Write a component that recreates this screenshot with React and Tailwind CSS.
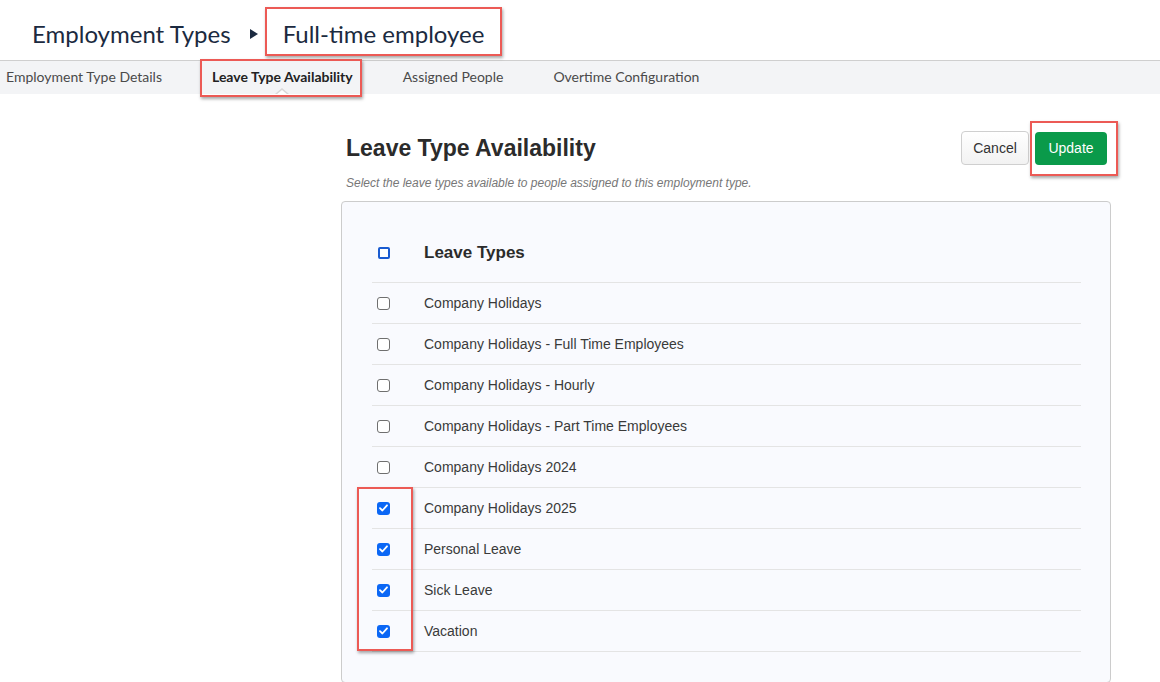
import { useState } from "react";

const LEAVE_TYPES = [
  { name: "Company Holidays", on: false },
  { name: "Company Holidays - Full Time Employees", on: false },
  { name: "Company Holidays - Hourly", on: false },
  { name: "Company Holidays - Part Time Employees", on: false },
  { name: "Company Holidays 2024", on: false },
  { name: "Company Holidays 2025", on: true },
  { name: "Personal Leave", on: true },
  { name: "Sick Leave", on: true },
  { name: "Vacation", on: true },
];

const TABS = ["Employment Type Details", "Leave Type Availability", "Assigned People", "Overtime Configuration"];

// red annotation outline
function Callout({ className }) {
  return (
    <div
      className={`absolute pointer-events-none border-[2.5px] border-[#ec5a55] shadow-[1px_2px_3px_rgba(0,0,0,0.35)] ${className}`}
    />
  );
}

function Check({ on, onClick }) {
  if (on) {
    return (
      <button
        onClick={onClick}
        className="w-[13px] h-[13px] rounded-[3px] bg-[#0b67f5] flex items-center justify-center"
      >
        <svg width="9" height="8" viewBox="0 0 9 8" fill="none">
          <path d="M1 4.2 L3.4 6.5 L8 1.3" stroke="white" strokeWidth="1.8" strokeLinecap="round" strokeLinejoin="round" />
        </svg>
      </button>
    );
  }
  return (
    <button
      onClick={onClick}
      className="w-[13px] h-[13px] rounded-[3px] bg-white border border-[#6f6f6f]"
    />
  );
}

export default function App() {
  const [items, setItems] = useState(LEAVE_TYPES);

  const toggle = (i) =>
    setItems((prev) => prev.map((it, j) => (j === i ? { ...it, on: !it.on } : it)));

  return (
    <div className="w-[1160px] h-[682px] overflow-hidden bg-white">
      {/* Breadcrumb */}
      <div className="h-[60px] flex items-start pt-[7px] pl-[32px] font-['Lato',sans-serif] text-[#1b2a40] text-[24px]">
        <span className="h-[49px] flex items-center pt-[4px]">Employment Types</span>
        <span className="mt-[22px] ml-[19px] mr-[7px] w-0 h-0 border-y-[5px] border-y-transparent border-l-[8px] border-l-[#1b2a40]" />
        <div className="relative h-[49px] flex items-center pt-[4px] px-[18px]">
          <span>Full-time employee</span>
          <Callout className="left-0 right-0 top-0 bottom-0" />
        </div>
      </div>

      {/* Tabs */}
      <div className="h-[34px] bg-[#f3f4f6] border-t border-[#cfcfcf] flex items-center gap-[50px] pl-[6px] pb-[3px] font-['Lato',sans-serif] text-[14px]">
        {TABS.map((t) =>
          t === "Leave Type Availability" ? (
            <div key={t} className="relative h-full flex items-center font-bold text-[#222]">
              <span>{t}</span>
              <span className="absolute left-1/2 -translate-x-1/2 -bottom-[3px] w-0 h-0 border-x-[7px] border-x-transparent border-b-[6px] border-b-[#d8d8d8]" />
              <span className="absolute left-1/2 -translate-x-1/2 -bottom-[4px] w-0 h-0 border-x-[6px] border-x-transparent border-b-[5px] border-b-white" />
              <Callout className="-left-[12px] -right-[9px] -top-[2px] -bottom-[6px]" />
            </div>
          ) : (
            <span key={t} className="text-[#4a4a4a]">{t}</span>
          )
        )}
      </div>

      {/* Content */}
      <div className="pl-[341px] w-[1111px] font-['Liberation_Sans',Arial,sans-serif]">
        <div className="h-[34px] flex items-center justify-between mt-[37px] pl-[5px] pr-[4px]">
          <h2 className="text-[23px] leading-none font-bold text-[#2b2b2b]">Leave Type Availability</h2>
          <div className="flex items-center gap-[6px]">
            <button className="h-[34px] w-[68px] rounded-[4px] border border-[#cfcfcf] bg-gradient-to-b from-white to-[#f2f2f2] text-[14px] text-[#333]">
              Cancel
            </button>
            <div className="relative">
              <button className="h-[33px] w-[72px] rounded-[4px] bg-[#0a9a4a] text-[14px] text-white">
                Update
              </button>
              <Callout className="-left-[5px] -right-[11px] -top-[11px] -bottom-[11px]" />
            </div>
          </div>
        </div>
        <p className="pl-[5px] mt-[9px] text-[12px] leading-[18px] italic text-[#777]">
          Select the leave types available to people assigned to this employment type.
        </p>

        {/* Leave types panel */}
        <div className="mt-[9px] h-[482px] border border-[#cccccc] rounded-[4px] bg-[#f9fafe] pt-[21px] pl-[30px] pr-[29px]">
          <div className="relative">
            <div className="h-[60px] flex items-center border-b border-[#e4e4e4]">
              <span className="ml-[6px] w-[12px] h-[12px] rounded-[2px] border-[2.5px] border-[#1a5bd0] bg-white" />
              <span className="ml-[34px] text-[17px] font-bold text-[#2b2b2b]">Leave Types</span>
            </div>
            {items.map((it, i) => (
              <div key={it.name} className="h-[41px] flex items-center border-b border-[#e4e4e4]">
                <span className="ml-[5px] flex">
                  <Check on={it.on} onClick={() => toggle(i)} />
                </span>
                <span className="ml-[34px] text-[14px] text-[#3a3a3a]">{it.name}</span>
              </div>
            ))}
            <Callout className="-left-[15px] top-[264px] w-[56px] h-[164px]" />
          </div>
        </div>
      </div>
    </div>
  );
}
